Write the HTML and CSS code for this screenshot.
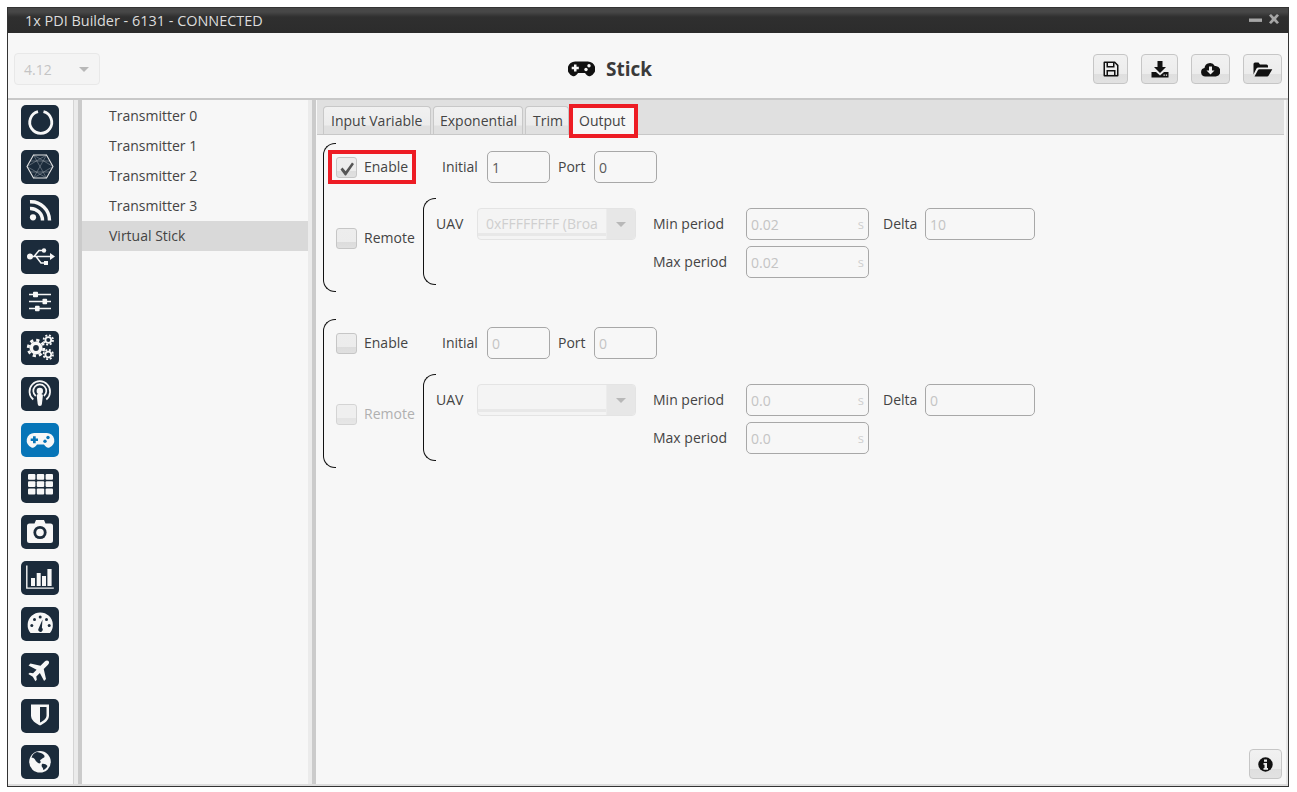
FILE: index.html
```html
<!DOCTYPE html>
<html lang="en">
<head>
<meta charset="utf-8">
<title>1x PDI Builder</title>
<link rel="stylesheet" href="styles.css">
</head>
<body>
<div class="window">
  <header class="titlebar">
    <span class="title-text">1x PDI Builder - 6131 - CONNECTED</span>
    <span class="win-controls">
      <svg width="32" height="12" viewBox="0 0 32 12"><rect x="1" y="4.500" width="13" height="3.400"/><path d="M21 1.500l2-1.500 3 3 3-3 2 1.500-3 3.500 3 3.500-2 1.500-3-3-3 3-2-1.500 3-3.500z"/></svg>
    </span>
  </header>

  <div class="toolbar">
    <div class="version"><span>4.12</span><i class="caret"></i></div>
    <div class="page-title">
      <svg class="title-icon" width="27" height="16" viewBox="0 0 27 16"><path fill="#111" d="M7.500.5h12a7.500 7.500 0 0 1 3 14.500c-2 .8-4-.5-5.500-3h-7c-1.500 2.500-3.500 3.800-5.500 3a7.500 7.500 0 0 1 3-14.500z"/><path d="M6 3.500h2.500v2.300h2.300v2.400h-2.300v2.300h-2.500v-2.300h-2.300v-2.400h2.300z" fill="#f7f7f7"/><circle cx="21" cy="4.800" r="1.700" fill="#f7f7f7"/><circle cx="18" cy="8.500" r="1.700" fill="#f7f7f7"/></svg>
      <span>Stick</span>
    </div>
    <div class="tool-buttons">
      <button class="tool b-save"><svg width="16" height="16" viewBox="0 0 16 16"><path fill-rule="evenodd" d="M1.500 0.500h10.500l3.500 3.500v10.500a1 1 0 0 1-1 1h-13a1 1 0 0 1-1-1v-13a1 1 0 0 1 1-1zM2 2v12h1.500v-5h9v5h1.500v-9.300l-2.500-2.700v4.500h-8v-4.500zM5 2v3h5v-3zM5 10.500v3.500h6v-3.500z"/></svg></button>
      <button class="tool b-down"><svg width="18" height="17" viewBox="0 0 18 17"><path d="M6.500 0h5v6h3.500l-6 6-6-6h3.500z"/><path d="M0.500 11h4.500l4 3.500 4-3.500h4.500v5.500h-17z"/><rect x="12.500" y="13.500" width="1.300" height="1.300" fill="#e8e8e8"/><rect x="14.800" y="13.500" width="1.300" height="1.300" fill="#e8e8e8"/></svg></button>
      <button class="tool b-cloud"><svg width="19" height="15" viewBox="0 0 19 15"><path d="M4.500 14.500a4.300 4.300 0 0 1-1-8.500 5.500 5.500 0 0 1 10.300-2 4 4 0 0 1 1 0 5.300 5.300 0 0 1 0 10.500z"/><path d="M8 4.500h3v4h2.500l-4 4-4-4h2.500z" fill="#f0f0f0"/></svg></button>
      <button class="tool b-folder"><svg width="20" height="15" viewBox="0 0 20 15"><path d="M0.500 12.500v-10.500a1.500 1.500 0 0 1 1.500-1.500h3.500l1.500 2h6.500a1.500 1.500 0 0 1 1.500 1.500v1.500h-9.500a2.500 2.500 0 0 0-2.200 1.300z"/><path d="M1.500 14.500l3.500-6.500a1.500 1.500 0 0 1 1.300-.8h13l-3.800 6.500a1.500 1.500 0 0 1-1.300.8z"/></svg></button>
    </div>
  </div>

  <div class="main">
    <nav class="sidebar">
      <a class="nav-btn"><svg viewBox="0 0 38 34"><path class="line" d="M22.500 6.700a11 11 0 1 1-5.500 0" stroke-width="2.800"/></svg></a>
      <a class="nav-btn"><svg viewBox="0 0 38 34"><path class="mesh" d="M12.500 5l13 23M25.500 5l-13 23M6 16.500l19.500-11.500M6 16.500l19.500 11.500M32 16.500l-19.500-11.500M32 16.500l-19.500 11.500M9 11h20M9 22h20"/><path class="hair" d="M6 16.500l6.500-11.500h13l6.500 11.500-6.500 11.500h-13z"/></svg></a>
      <a class="nav-btn"><svg viewBox="0 0 38 34"><circle class="fill" cx="12" cy="22.300" r="3.100"/><path class="line" d="M9 13.500a12 12 0 0 1 12.500 12M9 6.800a18.500 18.500 0 0 1 19.500 18.700" stroke-width="3.400"/></svg></a>
      <a class="nav-btn"><svg viewBox="0 0 38 34"><circle class="fill" cx="9" cy="16.500" r="3"/><path class="line" d="M9 16.500h21M13 16.500l5-6h4M15 16.500l5 6.500h4" stroke-width="1.500"/><path class="fill" d="M29 13l5 3.500-5 3.500z"/><circle class="fill" cx="23" cy="10.500" r="2.200"/><rect class="fill" x="23" y="21" width="4" height="4"/></svg></a>
      <a class="nav-btn"><svg viewBox="0 0 38 34"><path class="line" d="M8 9.500h22M8 16.500h22M8 23.500h22" stroke-width="1.500"/><rect class="fill" x="12" y="6.800" width="5" height="5.400" rx=".8"/><rect class="fill" x="21.500" y="13.800" width="4.600" height="5.400" rx=".8"/><rect class="fill" x="14" y="20.800" width="4.600" height="5.400" rx=".8"/></svg></a>
      <a class="nav-btn"><svg viewBox="0 0 38 34"><circle class="line" cx="15" cy="17" r="4.700" stroke-width="3.600"/><circle class="line" cx="15" cy="17" r="7.800" stroke-width="2.800" stroke-dasharray="3.200 2.920"/><circle class="line" cx="27.300" cy="9" r="2.900" stroke-width="1.800"/><circle class="line" cx="27.300" cy="9" r="4.700" stroke-width="1.800" stroke-dasharray="2 1.700"/><circle class="line" cx="27.300" cy="23.500" r="2.900" stroke-width="1.800"/><circle class="line" cx="27.300" cy="23.500" r="4.700" stroke-width="1.800" stroke-dasharray="2 1.700"/></svg></a>
      <a class="nav-btn"><svg viewBox="0 0 38 34"><path class="line" d="M12.300 22.500a10.300 10.300 0 1 1 13 0M14.700 19a6.500 6.500 0 1 1 8.200 0" stroke-width="1.700"/><circle class="fill" cx="18.800" cy="14" r="3.200"/><path class="fill" d="M15.700 18.500a3.100 1.800 0 0 1 6.200 0l-1 8.500a2.100 2.100 0 0 1-4.200 0z"/></svg></a>
      <a class="nav-btn active"><svg viewBox="0 0 38 34"><path class="fill" d="M13.500 10h12a7.500 7.500 0 0 1 3 14.500c-2 .8-4-.5-5.500-3h-7c-1.500 2.500-3.500 3.800-5.500 3a7.500 7.500 0 0 1 3-14.500z"/><path d="M12 13.200h2.700v2.200h2.300v2.600h-2.300v2.200h-2.700v-2.200h-2.300v-2.600h2.300z" class="cut"/><circle class="cut" cx="27" cy="14.500" r="1.700"/><circle class="cut" cx="24" cy="18.200" r="1.700"/></svg></a>
      <a class="nav-btn"><svg viewBox="0 0 38 34"><g class="fill"><rect x="7" y="5" width="7.400" height="5.800" rx="1"/><rect x="15.800" y="5" width="7.400" height="5.800" rx="1"/><rect x="24.600" y="5" width="7.400" height="5.800" rx="1"/><rect x="7" y="12.300" width="7.400" height="5.800" rx="1"/><rect x="15.800" y="12.300" width="7.400" height="5.800" rx="1"/><rect x="24.600" y="12.300" width="7.400" height="5.800" rx="1"/><rect x="7" y="19.600" width="7.400" height="5.800" rx="1"/><rect x="15.800" y="19.600" width="7.400" height="5.800" rx="1"/><rect x="24.600" y="19.600" width="7.400" height="5.800" rx="1"/></g></svg></a>
      <a class="nav-btn"><svg viewBox="0 0 38 34"><path class="fill" d="M8.500 8.500h5l1.500-3.500h8l1.500 3.500h5a2.500 2.500 0 0 1 2.500 2.500v14.500a2.500 2.500 0 0 1-2.500 2.500h-21a2.500 2.500 0 0 1-2.500-2.500v-14.500a2.500 2.500 0 0 1 2.500-2.500z"/><circle class="cut" cx="19" cy="17.500" r="6.600"/><circle class="fill" cx="19" cy="17.500" r="3.800"/></svg></a>
      <a class="nav-btn"><svg viewBox="0 0 38 34"><path class="line" d="M5.800 4.500v22.600h27" stroke-width="1.400"/><g class="fill"><rect x="10" y="17" width="4" height="8"/><rect x="15.700" y="12" width="4" height="13"/><rect x="21" y="15" width="4" height="10"/><rect x="26.400" y="8" width="4.200" height="17"/></g></svg></a>
      <a class="nav-btn"><svg viewBox="0 0 38 34"><path class="fill" d="M9.500 26a12.600 12.600 0 1 1 19.500 0z"/><g class="cut"><circle cx="10.800" cy="18.500" r="1.500"/><circle cx="13.500" cy="12.500" r="1.500"/><circle cx="19.200" cy="10" r="1.500"/><circle cx="25.500" cy="12.500" r="1.500"/><circle cx="28.200" cy="18.500" r="1.500"/><path d="M21.500 12.500l-.6 8.300a2.300 2.300 0 1 1-3.700 1.800z"/></g></svg></a>
      <a class="nav-btn"><svg viewBox="0 0 38 34"><path class="fill" transform="rotate(45 19 16.500) translate(7 4.500)" d="M12 0c1.500 0 2.300 1.500 2.300 3v6l8.700 5.500v2.700l-8.700-2.700v5l2.700 2v2l-5-1.300-5 1.300v-2l2.700-2v-5l-8.700 2.700v-2.700l8.700-5.500v-6c0-1.500.8-3 2.300-3z"/></svg></a>
      <a class="nav-btn"><svg viewBox="0 0 38 34"><path class="fill" d="M10 5.500h18v11c0 5-5 8-9 10-4-2-9-5-9-10z"/><path class="cut" d="M19 8h6.500v8.300c0 3.500-3.500 5.800-6.500 7.300z"/></svg></a>
      <a class="nav-btn"><svg viewBox="0 0 38 34"><circle class="fill" cx="19" cy="16.800" r="10.800"/><path class="cut" d="M16 7c3 .5 5 1 7 3 1 1.500.5 3-1 3l-2 1.500c-1.500.5-1 2 0 2.500l-1.500 1.500c-2-.5-3.500-2-4.500-4-1-1.500-2.500-2-3.500-1.500.5-3 3-5.500 5.500-6zM21 19c2-.5 4 .5 5.500 2-1 2-2.500 3.500-4.500 4 .5-1 0-2-1-3-.5-1-.5-2 0-3z"/></svg></a>
    </nav>
    <div class="splitter"></div>

    <ul class="list">
      <li>Transmitter 0</li>
      <li>Transmitter 1</li>
      <li>Transmitter 2</li>
      <li>Transmitter 3</li>
      <li class="selected">Virtual Stick</li>
    </ul>
    <div class="splitter"></div>

    <section class="content">
      <div class="tabs">
        <span class="tab t1">Input Variable</span>
        <span class="tab t2">Exponential</span>
        <span class="tab t3">Trim</span>
        <span class="tab current">Output</span>
      </div>
      <div class="pane">
        <div class="group">
          <div class="row-top">
            <label class="check-wrap marked"><span class="check on"><svg width="17" height="17" viewBox="0 0 17 17"><path d="M2.500 10.500l2-2 3.200 3.700 6.300-8.700 2 1.500-8 11.500h-1z"/></svg></span><span class="check-text">Enable</span></label>
            <span class="lab l-initial">Initial</span>
            <div class="field small live">1</div>
            <span class="lab l-port">Port</span>
            <div class="field small live">0</div>
          </div>
          <div class="row-sub">
            <label class="remote"><span class="check"></span><span class="check-text">Remote</span></label>
            <div class="nested">
              <span class="lab">UAV</span>
              <div class="combo"><span>0xFFFFFFFF (Broa</span><b><i class="caret"></i></b></div>
              <span class="lab period">Min period</span>
              <div class="field"><span>0.02</span><em>s</em></div>
              <span class="lab delta">Delta</span>
              <div class="field">10</div>
              <span class="lab period second">Max period</span>
              <div class="field"><span>0.02</span><em>s</em></div>
            </div>
          </div>
        </div>

        <div class="group">
          <div class="row-top">
            <label class="check-wrap"><span class="check"></span><span class="check-text">Enable</span></label>
            <span class="lab l-initial">Initial</span>
            <div class="field small">0</div>
            <span class="lab l-port">Port</span>
            <div class="field small">0</div>
          </div>
          <div class="row-sub">
            <label class="remote off"><span class="check"></span><span class="check-text">Remote</span></label>
            <div class="nested">
              <span class="lab">UAV</span>
              <div class="combo"><span></span><b><i class="caret"></i></b></div>
              <span class="lab period">Min period</span>
              <div class="field"><span>0.0</span><em>s</em></div>
              <span class="lab delta">Delta</span>
              <div class="field">0</div>
              <span class="lab period second">Max period</span>
              <div class="field"><span>0.0</span><em>s</em></div>
            </div>
          </div>
        </div>

        <button class="tool info"><svg width="15" height="15" viewBox="0 0 15 15"><circle cx="7.500" cy="7.500" r="7.200"/><path fill="#ececec" d="M6 2.500h3v2.300h-3zM5.500 6h3.500v5h1v1.700h-4.500v-1.700h1v-3.300h-1z"/></svg></button>
      </div>
    </section>
  </div>
</div>
</body>
</html>
```

FILE: styles.css
```css
* { box-sizing: border-box; }
html, body { margin: 0; height: 100%; }
body {
  background: #fff;
  padding: 7px 8px 6px 7px;
  font-family: "Open Sans", "Liberation Sans", sans-serif;
  font-size: 14px;
  color: #444;
}
.window {
  height: 780px;
  border: 1px solid #333;
  background: #f7f7f7;
  display: flex;
  flex-direction: column;
}
.titlebar {
  height: 25px;
  flex: none;
  background: linear-gradient(#474747 0, #474747 4px, #2f2f2f 9px, #2c2c2c 100%);
  color: #dcdcdc;
  display: flex;
  align-items: center;
  justify-content: space-between;
  padding: 0 8px 1px 17px;
  font-size: 14.450px;
}
.win-controls svg { display: block; fill: #a6a6a6; }

.toolbar {
  height: 67px;
  flex: none;
  display: flex;
  align-items: center;
  padding: 0 6px;
  border-bottom: 2px solid #c8c8c8;
}
.version {
  width: 86px;
  height: 32px;
  margin-top: 7px;
  border: 1px solid #e8e8e8;
  border-radius: 4px;
  background: #f4f4f4;
  color: #c4c4c4;
  display: flex;
  align-items: center;
  justify-content: space-between;
  padding: 0 10px 0 9px;
}
.caret {
  display: block;
  width: 0;
  height: 0;
  border-left: 5px solid transparent;
  border-right: 5px solid transparent;
  border-top: 5px solid #b8b8b8;
}
.page-title {
  margin-left: 468px;
  margin-top: 7px;
  display: flex;
  align-items: center;
  gap: 11px;
  font-size: 19px;
  font-weight: 700;
  color: #3a3a3a;
}
.title-icon { display: block; }
.tool-buttons {
  margin-left: auto;
  margin-top: 7px;
  display: flex;
  gap: 13px;
}
.tool {
  height: 30px;
  padding: 0;
  border: 1px solid #c6c6c6;
  border-radius: 4px;
  background: linear-gradient(#f1f1f1 0, #ececec 68%, #dfdfdf 69%, #e2e2e2 100%);
  display: flex;
  align-items: center;
  justify-content: center;
}
.tool svg { display: block; fill: #111; }
.b-save { width: 35px; }
.b-down { width: 37px; }
.b-cloud { width: 39px; }
.b-folder { width: 39px; }

.main {
  flex: 1;
  min-height: 0;
  display: flex;
  border-bottom: 2px solid #dcdcdc;
}
.sidebar {
  width: 66px;
  flex: none;
  padding: 5px 0 0 13px;
  border-right: 1px solid #d4d4d4;
  display: flex;
  flex-direction: column;
  gap: 12.500px;
}
.nav-btn {
  display: block;
  width: 38px;
  height: 33.500px;
  flex: none;
  border-radius: 5px;
  background: #1b2b3b;
  --bg: #1b2b3b;
}
.nav-btn:nth-child(-n+4) { margin-bottom: -1px; }
.nav-btn.active { background: #0775b8; --bg: #0775b8; }
.nav-btn svg { display: block; width: 38px; height: 34px; }
.fill { fill: #f7f7f7; }
.cut { fill: var(--bg); }
.line { fill: none; stroke: #f7f7f7; }
.hair { fill: none; stroke: #e4e4e4; stroke-width: 1.100; }
.mesh { fill: none; stroke: #9aa3ab; stroke-width: .5; }

.splitter {
  width: 8px;
  flex: none;
  background: linear-gradient(90deg, #ebebeb 0, #ebebeb 50%, #cbcbcb 50%, #cbcbcb 100%);
}
.list {
  width: 226px;
  flex: none;
  margin: 0;
  padding: 1px 0 0;
  list-style: none;
}
.list li {
  height: 30px;
  line-height: 30px;
  padding-left: 27px;
}
.list li.selected { background: #d9d9d9; }

.content {
  flex: 1;
  min-width: 0;
  display: flex;
  flex-direction: column;
  border-right: 2px solid #e6e6e6;
}
.tabs {
  height: 35px;
  flex: none;
  margin: 0 2px 0 1px;
  padding: 0 0 0 6px;
  background: #e0e0e0;
  border-bottom: 1px solid #c8c8c8;
  display: flex;
  align-items: flex-end;
  gap: 2px;
}
.tab {
  height: 28px;
  padding: 0 0 0 7px;
  border: 1px solid #c8c8c8;
  border-bottom: 0;
  border-radius: 4px 4px 0 0;
  background: linear-gradient(#f1f1f1 0, #ececec 68%, #e0e0e0 69%, #e0e0e0 100%);
  line-height: 28px;
  white-space: nowrap;
}
.tab.t1 { width: 108px; }
.tab.t2 { width: 90px; padding-left: 6px; }
.tab.t3 { width: 44px; margin-right: 1px; }
.tab.current {
  width: 63px;
  padding-left: 6px;
  line-height: 26px;
  background: #f7f7f7;
  margin-bottom: -1px;
  border-radius: 0;
  outline: 4px solid #ed1c24;
  outline-offset: -1px;
}
.marked {
  outline: 4px solid #ed1c24;
  outline-offset: -1px;
}

.pane {
  position: relative;
  flex: 1;
  min-height: 0;
  padding: 8px 0 0 7px;
  display: flex;
  flex-direction: column;
  gap: 27px;
}
.group {
  position: relative;
  width: 760px;
  height: 149px;
  padding: 8px 0 0 13px;
}
.group::before,
.nested::before {
  content: "";
  position: absolute;
  left: 0;
  top: 0;
  bottom: 0;
  width: 12px;
  border: 1.500px solid #111;
  border-right: 0;
  border-radius: 12px 0 0 12px;
}
.row-top {
  display: flex;
  align-items: center;
  height: 32px;
}
.check-wrap {
  width: 82px;
  height: 28px;
  margin-left: -5px;
  padding-left: 5px;
  margin-right: 29px;
  display: flex;
  align-items: center;
  gap: 7px;
  white-space: nowrap;
}
.check-text { margin-top: -2px; }
.check {
  width: 21px;
  height: 21px;
  flex: none;
  border: 1px solid #c6c6c6;
  border-radius: 3px;
  background: linear-gradient(#ededed 0, #ececec 66%, #dcdcdc 67%, #e0e0e0 100%);
  display: flex;
  align-items: center;
  justify-content: center;
}
.check svg { display: block; fill: #555; }
.lab { white-space: nowrap; }
.row-top .lab { margin-top: -2px; }
.l-initial { width: 45px; }
.l-port { width: 36px; margin-left: 8px; }

.field {
  height: 32px;
  border: 1.500px solid #a8a8a8;
  border-radius: 5px;
  padding: 0 4px;
  color: #c4c4c4;
  display: flex;
  align-items: center;
  justify-content: space-between;
  background: #f7f7f7;
}
.field.small { width: 63px; }
.field.live { color: #5a5a5a; }
.field em { font-style: normal; font-size: 13px; color: #cfcfcf; }

.row-sub {
  display: flex;
  margin-top: 15px;
}
.remote {
  width: 87px;
  height: 21px;
  margin-top: 30px;
  display: flex;
  align-items: center;
  gap: 7px;
  flex: none;
}
.remote.off { color: #b0b0b0; }
.remote.off .check { opacity: .7; }
.nested {
  position: relative;
  height: 87px;
  padding: 10px 0 0 13px;
  display: grid;
  grid-template-columns: 41px 159px 110px 123px 56px 110px;
  grid-template-rows: 32px 32px;
  row-gap: 6px;
  align-items: center;
}
.nested .lab { height: 32px; line-height: 32px; }
.nested .period { margin-left: 17px; }
.nested .delta { margin-left: 14px; }
.nested .second { grid-column: 3; }
.combo {
  height: 32px;
  border: 1px solid #e4e4e4;
  border-radius: 4px;
  background: linear-gradient(#f4f4f4 0, #f4f4f4 80%, #e8e8e8 81%, #e8e8e8 90%, #f4f4f4 91%);
  display: flex;
  overflow: hidden;
  color: #cfcfcf;
}
.combo span {
  flex: 1;
  min-width: 0;
  padding-left: 8px;
  line-height: 30px;
  white-space: nowrap;
}
.combo b {
  width: 29px;
  flex: none;
  background: #e7e7e7;
  border-left: 1px solid #ececec;
  display: flex;
  align-items: center;
  justify-content: center;
}
.info {
  position: absolute;
  right: 4px;
  bottom: 5px;
  width: 33px;
}
```
